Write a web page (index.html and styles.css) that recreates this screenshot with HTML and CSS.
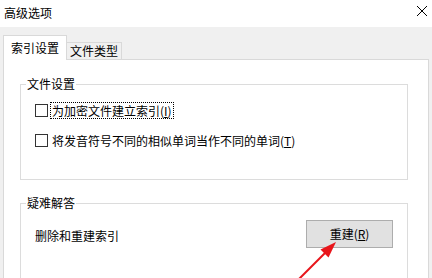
FILE: index.html
```html
<!DOCTYPE html>
<html lang="zh-CN">
<head>
<meta charset="utf-8">
<title>高级选项</title>
<link rel="stylesheet" href="styles.css">
</head>
<body>
<div class="window">
  <div class="titlebar">
    <span class="title">高级选项</span>
    <svg class="close" width="12" height="12" viewBox="0 0 12 12"><path d="M1 1L11 11M11 1L1 11" stroke="#000" stroke-width="1"/></svg>
  </div>
  <div class="tabs">
    <div class="tab active">索引设置</div>
    <div class="tab">文件类型</div>
  </div>
  <div class="panel">
    <fieldset class="group">
      <legend>文件设置</legend>
      <div class="rows">
        <div class="row"><span class="box"></span><span class="label focus">为加密文件建立索引(<u>I</u>)</span></div>
        <div class="row"><span class="box"></span><span class="label">将发音符号不同的相似单词当作不同的单词(<u>T</u>)</span></div>
      </div>
    </fieldset>
    <fieldset class="group group2">
      <legend>疑难解答</legend>
      <div class="action">
        <span>删除和重建索引</span>
        <button class="btn">重建(<u>R</u>)</button>
      </div>
    </fieldset>
  </div>
  <svg class="arrow" width="432" height="278" viewBox="0 0 432 278">
    <line x1="297" y1="281" x2="328" y2="250" stroke="#e8151b" stroke-width="2"/>
    <polygon points="336,242 320.5,249.5 328.5,257.5" fill="#e8151b"/>
  </svg>
</div>
</body>
</html>
```
FILE: styles.css
```css
html, body {
  margin: 0;
  padding: 0;
}
body {
  width: 432px;
  height: 278px;
  overflow: hidden;
  background: #f0f0f0;
  font-family: "Microsoft YaHei", "Noto Sans CJK SC", "Noto Sans", sans-serif;
  font-size: 12px;
  line-height: 16px;
  color: #000;
}
.window {
  position: relative;
  height: 278px;
  overflow: hidden;
}
.titlebar {
  height: 27px;
  background: #fff;
  display: flex;
  align-items: center;
  justify-content: space-between;
  padding: 0 4px;
  box-sizing: border-box;
}
.title {
  margin-top: -2px;
}
.close {
  margin-top: -6px;
}
.tabs {
  display: flex;
  align-items: flex-end;
  padding: 8px 0 0 3px;
  position: relative;
  z-index: 1;
}
.tab {
  box-sizing: border-box;
  border: 1px solid #d9d9d9;
  border-bottom: none;
  border-left: none;
  height: 17px;
  padding: 0;
  line-height: 16px;
  background: #f0f0f0;
  width: 55px;
  text-align: center;
  white-space: nowrap;
}
.tab.active {
  border-left: 1px solid #d9d9d9;
  height: 25px;
  width: 64px;
  background: #fff;
  padding-top: 4px;
  margin-bottom: -1px;
}
.panel {
  box-sizing: border-box;
  margin: 0 3px;
  background: #fff;
  border: 1px solid #d9d9d9;
  border-bottom: none;
  height: 219px;
  padding: 16px 20px 0 16px;
  overflow: hidden;
}
.group {
  margin: 0;
  padding: 0;
  border: 1px solid #dcdcdc;
  min-width: 0;
}
.group legend {
  margin-left: 5px;
  padding: 0 1px;
  line-height: 16px;
}
.rows {
  display: flex;
  flex-direction: column;
  gap: 10px;
  padding: 8px 0 29px 14px;
}
.row {
  display: flex;
  align-items: center;
  height: 20px;
}
.box {
  width: 11px;
  height: 11px;
  border: 1px solid #333;
  background: #fff;
  margin-right: 3px;
}
.label {
  padding: 0 1px;
  line-height: 15px;
}
.label.focus {
  outline: 1px dotted #000;
}
.group2 {
  margin-top: 15px;
}
.action {
  display: flex;
  justify-content: space-between;
  align-items: center;
  padding: 9px 14px 40px 14px;
}
.action span {
  margin-top: 3px;
}
.btn {
  width: 87px;
  height: 28px;
  background: #e1e1e1;
  border: 1px solid #adadad;
  font: inherit;
  color: #000;
  padding: 0;
}
.arrow {
  position: absolute;
  left: 0;
  top: 0;
  pointer-events: none;
}
```
